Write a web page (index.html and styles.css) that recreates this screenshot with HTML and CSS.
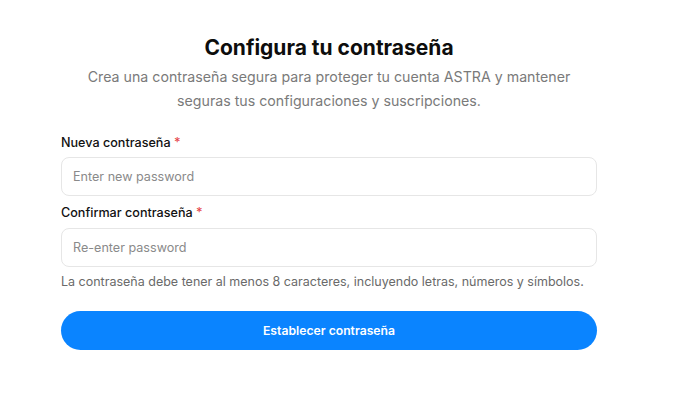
FILE: index.html
```html
<!DOCTYPE html>
<html lang="es">
<head>
<meta charset="utf-8">
<link rel="stylesheet" href="styles.css">
</head>
<body>
<main class="card">
  <h1 class="title">Configura tu contraseña</h1>
  <p class="subtitle">Crea una contraseña segura para proteger tu cuenta ASTRA y mantener seguras tus configuraciones y suscripciones.</p>
  <form class="form">
    <label class="label first" for="pw">Nueva contraseña <span class="req">*</span></label>
    <input class="input" id="pw" type="password" placeholder="Enter new password">
    <label class="label" for="pw2">Confirmar contraseña <span class="req">*</span></label>
    <input class="input" id="pw2" type="password" placeholder="Re-enter password">
    <p class="hint">La contraseña debe tener al menos 8 caracteres, incluyendo letras, números y símbolos.</p>
    <button class="btn" type="button">Establecer contraseña</button>
  </form>
</main>
</body>
</html>
```
FILE: styles.css
```css
* { box-sizing: border-box; }
html, body { margin: 0; background: #fff; }
body {
  font-family: Inter, "Noto Sans", sans-serif;
  color: #111;
  padding: 34px 0 0 61px;
}
.card { width: 536px; display: flex; flex-direction: column; }
.title {
  margin: 0;
  text-align: center;
  font-size: 21px;
  font-weight: 700;
  line-height: 27px;
  color: #0d0d0d;
}
.subtitle {
  margin: 4px 0 0;
  padding: 0 20px;
  text-align: center;
  font-size: 14.2px;
  line-height: 24px;
  color: #7a7a7a;
}
.form { display: flex; flex-direction: column; margin-top: 21px; }
.label {
  font-size: 12.6px;
  font-weight: 500;
  line-height: 18px;
  color: #111;
  margin-bottom: 6px;
}
.label.first { margin-bottom: 5px; }
.req { color: #e5484d; }
.input {
  height: 39px;
  border: 1px solid #e6e6e6;
  border-radius: 8px;
  padding: 0 11px;
  font-family: inherit;
  font-size: 12.6px;
  color: #111;
  margin-bottom: 8px;
  outline: none;
}
.input::placeholder { color: #8a8a8a; }
.hint {
  margin: -2px 0 0;
  font-size: 12.5px;
  line-height: 18px;
  color: #6a6a6a;
}
.btn {
  margin-top: 20px;
  height: 39px;
  border: none;
  border-radius: 20px;
  background: #0a84ff;
  color: #fff;
  font-family: inherit;
  font-size: 12.2px;
  font-weight: 600;
}
```
